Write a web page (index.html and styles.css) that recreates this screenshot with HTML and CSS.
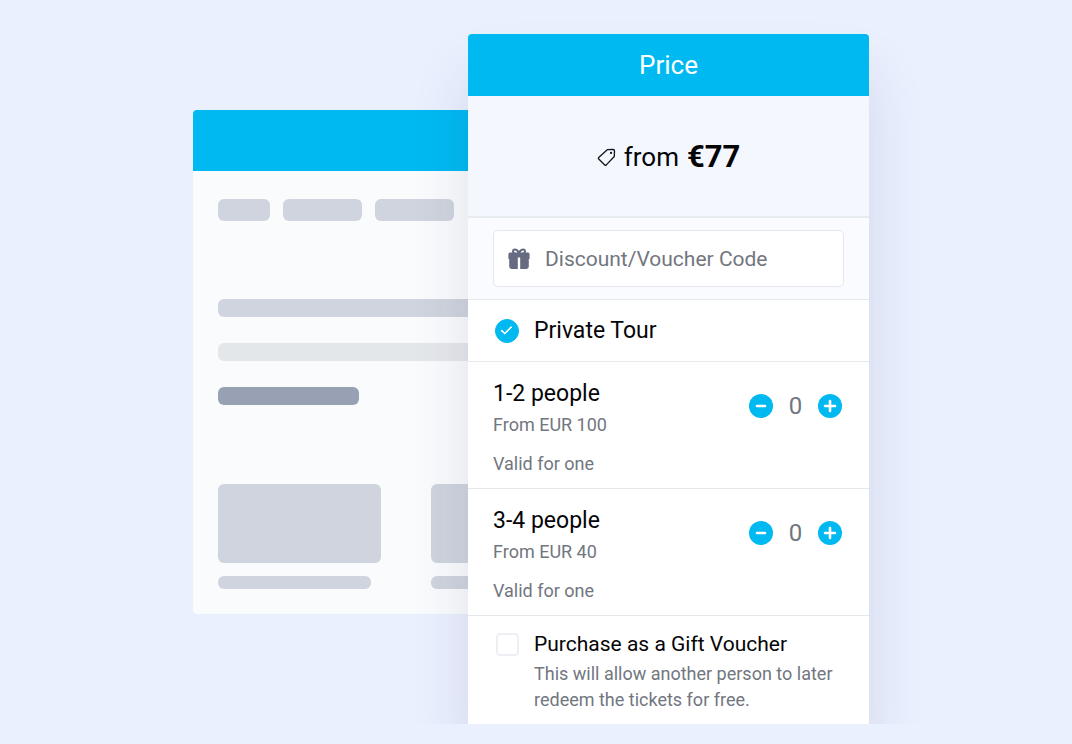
FILE: index.html
```html
<!DOCTYPE html>
<html lang="en">
<head>
  <meta charset="UTF-8" />
  <meta name="viewport" content="width=device-width, initial-scale=1.0" />
  <title>Tour Price</title>
  <link rel="stylesheet" href="styles.css">
</head>
<body>
  <main class="stage">
    <!-- Placeholder page behind the price card -->
    <div class="page-card" aria-hidden="true">
      <div class="page-header"></div>
      <div class="page-body">
        <div class="tags">
          <span class="block tag short"></span>
          <span class="block tag"></span>
          <span class="block tag"></span>
        </div>
        <div class="lines">
          <span class="block line"></span>
          <span class="block line light"></span>
          <span class="block line dark"></span>
        </div>
        <div class="tiles">
          <div class="tile">
            <span class="block picture"></span>
            <span class="block caption"></span>
          </div>
          <div class="tile">
            <span class="block picture"></span>
            <span class="block caption"></span>
          </div>
        </div>
      </div>
    </div>

    <!-- Price card -->
    <form class="price-card">
      <h1>Price</h1>

      <div class="from-price">
        <svg class="tag-icon" viewBox="0 0 20 20" width="19" height="19" fill="none" stroke="#14161c" stroke-width="1.4" stroke-linejoin="round">
          <path d="M10.8 1.8 L17 1.6 Q18.4 1.6 18.4 3 L18.2 9 L9.8 17.8 Q9 18.6 8.2 17.8 L1.8 11.6 Q1 10.8 1.8 10 Z" />
          <circle cx="14.8" cy="5.2" r="1.2" fill="#14161c" stroke="none" />
        </svg>
        <span>from</span>
        <strong>€77</strong>
      </div>

      <div class="discount">
        <div class="code-field">
          <svg class="gift-icon" viewBox="0 0 22 22" width="22" height="22">
            <path d="M7 5.5 C3.8 4.6 4.6 1.4 7.2 1.6 C9.4 1.8 10.4 3.6 11 5.5 C11.6 3.6 12.6 1.8 14.8 1.6 C17.4 1.4 18.2 4.6 15 5.5" fill="none" stroke="#666b82" stroke-width="2" />
            <path d="M2 4.6 H20 Q21.6 4.6 21.6 6.2 V11 H20.8 V18.6 Q20.8 21 18.4 21 H12.2 V9.4 H9.8 V21 H3.6 Q1.2 21 1.2 18.6 V11 H0.4 V6.2 Q0.4 4.6 2 4.6 Z" fill="#666b82" />
          </svg>
          <input type="text" placeholder="Discount/Voucher Code" aria-label="Discount/Voucher Code">
        </div>
      </div>

      <label class="tour">
        <input type="checkbox" class="round-check" checked>
        <span>Private Tour</span>
      </label>

      <div class="ticket">
        <div>
          <h2>1-2 people</h2>
          <p>From EUR 100</p>
          <p class="valid">Valid for one</p>
        </div>
        <div class="counter">
          <button type="button" aria-label="Remove 1-2 people">
            <svg viewBox="0 0 24 24" width="24" height="24"><path d="M8 12 H16" /></svg>
          </button>
          <output>0</output>
          <button type="button" aria-label="Add 1-2 people">
            <svg viewBox="0 0 24 24" width="24" height="24"><path d="M7 12 H17 M12 7 V17" /></svg>
          </button>
        </div>
      </div>

      <div class="ticket">
        <div>
          <h2>3-4 people</h2>
          <p>From EUR 40</p>
          <p class="valid">Valid for one</p>
        </div>
        <div class="counter">
          <button type="button" aria-label="Remove 3-4 people">
            <svg viewBox="0 0 24 24" width="24" height="24"><path d="M8 12 H16" /></svg>
          </button>
          <output>0</output>
          <button type="button" aria-label="Add 3-4 people">
            <svg viewBox="0 0 24 24" width="24" height="24"><path d="M7 12 H17 M12 7 V17" /></svg>
          </button>
        </div>
      </div>

      <div class="gift">
        <input type="checkbox" id="gift" class="square-check">
        <div>
          <label for="gift">Purchase as a Gift Voucher</label>
          <p>This will allow another person to later redeem the tickets for free.</p>
        </div>
      </div>
    </form>
  </main>
</body>
</html>
```
FILE: styles.css
```css
* {
  margin: 0;
  padding: 0;
  box-sizing: border-box;
}

body {
  font-family: Roboto, "Liberation Sans", sans-serif;
  background: #eaf0fe;
  color: #050507;
}

.stage {
  display: flex;
  justify-content: center;
  align-items: flex-start;
  padding: 34px 10px 0 0;
  overflow: hidden;
}

/* placeholder page */
.page-card {
  width: 275px;
  margin-top: 76px;
  background: #f9fbfd;
  border-radius: 4px 0 0 4px;
  overflow: hidden;
}

.page-header {
  height: 61px;
  background: #01b9f1;
}

.page-body {
  padding: 28px 0 25px 25px;
}

.block {
  display: block;
  flex-shrink: 0;
  background: #cfd4de;
  border-radius: 6px;
}

.tags {
  display: flex;
  gap: 13px;
}

.tag {
  width: 79px;
  height: 22px;
}

.tag.short {
  width: 52px;
}

.lines {
  display: grid;
  gap: 26px;
  margin-top: 78px;
}

.line {
  height: 18px;
  border-radius: 6px 0 0 6px;
}

.line.light {
  background: #e4e7ea;
}

.line.dark {
  width: 141px;
  background: #98a1b4;
  border-radius: 6px;
}

.tiles {
  display: flex;
  gap: 50px;
  margin-top: 79px;
}

.tile {
  flex-shrink: 0;
  width: 163px;
}

.picture {
  height: 79px;
}

.caption {
  width: 153px;
  height: 13px;
  margin-top: 13px;
}

/* price card */
.price-card {
  width: 401px;
  background: #fff;
  border-radius: 4px 4px 0 0;
  box-shadow: 0 40px 60px rgba(50, 45, 90, 0.12);
}

h1 {
  background: #01b9f1;
  color: #fff;
  border-radius: 4px 4px 0 0;
  font-size: 26px;
  font-weight: 400;
  line-height: 62px;
  text-align: center;
}

.from-price {
  display: flex;
  justify-content: center;
  align-items: center;
  gap: 8px;
  padding: 41px 0 39px;
  background: #f4f8fe;
  border-bottom: 2px solid #e6ebf0;
  font-size: 26px;
  line-height: 40px;
}

.from-price strong {
  font-size: 31px;
}

.discount {
  padding: 12px 25px;
  background: #f9fbfe;
  border-bottom: 1px solid #e4e9ee;
}

.code-field {
  display: flex;
  align-items: center;
  gap: 15px;
  height: 57px;
  padding: 0 14px;
  background: #fff;
  border: 1px solid #e4e8ee;
  border-radius: 5px;
}

.code-field input {
  flex: 1;
  min-width: 0;
  border: none;
  outline: none;
  background: none;
  font-family: inherit;
  font-size: 21px;
}

.code-field input::placeholder {
  color: #72767f;
}

.tour {
  display: flex;
  align-items: center;
  gap: 15px;
  padding: 0 27px;
  border-bottom: 1px solid #e6eaee;
  font-size: 23px;
  line-height: 61px;
}

.round-check,
.square-check {
  appearance: none;
  position: relative;
  flex-shrink: 0;
}

.round-check {
  width: 24px;
  height: 24px;
  border: 1px solid #01b9f1;
  border-radius: 50%;
}

.round-check:checked {
  background: #01b9f1;
}

.round-check:checked::after {
  content: "";
  position: absolute;
  top: 6px;
  left: 5px;
  width: 9px;
  height: 4px;
  border: solid #fff;
  border-width: 0 0 2px 2px;
  border-radius: 1px;
  transform: rotate(-45deg);
}

.ticket {
  display: flex;
  justify-content: space-between;
  align-items: flex-start;
  padding: 16px 27px 9px 25px;
  border-bottom: 1px solid #e4e8ec;
}

h2 {
  font-size: 23px;
  font-weight: 400;
  line-height: 32px;
}

.ticket p,
.gift p {
  color: #72767f;
  font-size: 18px;
  line-height: 26px;
}

.ticket p {
  line-height: 30px;
}

.ticket .valid {
  margin-top: 9px;
}

.counter {
  display: flex;
  align-items: center;
  gap: 15px;
  margin-top: 16px;
  color: #72767f;
  font-size: 24px;
  line-height: 24px;
}

.counter output {
  width: 15px;
  text-align: center;
}

.counter button {
  width: 24px;
  height: 24px;
  border: none;
  border-radius: 50%;
  background: #01b9f1;
  cursor: pointer;
}

.counter svg {
  display: block;
  stroke: #fff;
  stroke-width: 2.6;
  stroke-linecap: round;
}

.gift {
  display: flex;
  align-items: flex-start;
  gap: 15px;
  padding: 12px 25px 11px 28px;
}

.square-check {
  width: 23px;
  height: 23px;
  margin-top: 5px;
  border: 2px solid #f0edf5;
  border-radius: 4px;
  background: #fff;
}

.square-check:checked {
  background: #01b9f1;
}

.gift label {
  display: block;
  font-size: 21px;
  line-height: 33px;
}
```
